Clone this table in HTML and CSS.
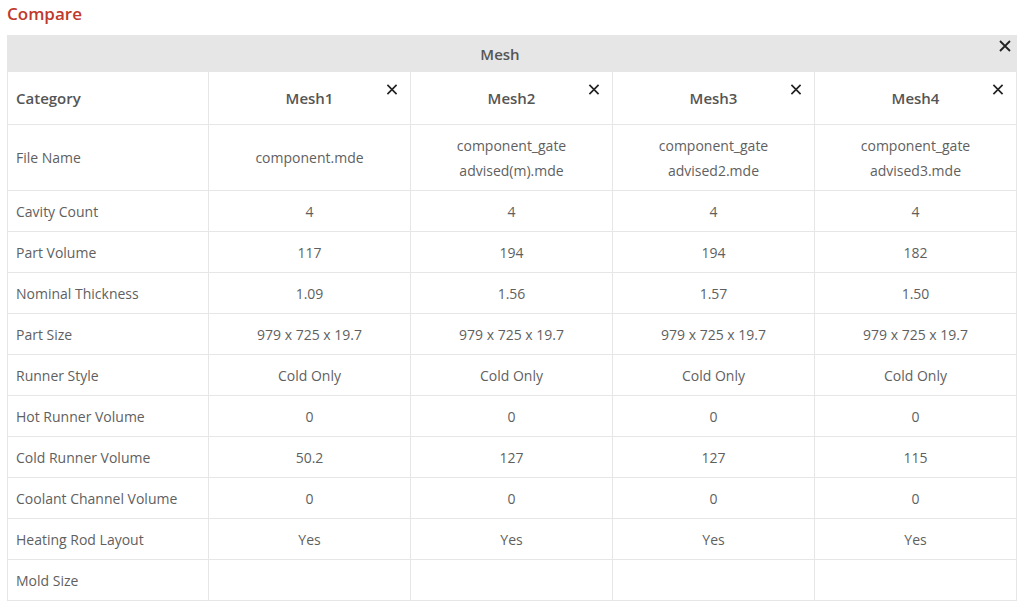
FILE: index.html
```html
<!DOCTYPE html>
<html>
<head>
<meta charset="utf-8">
<link rel="stylesheet" href="styles.css">
</head>
<body>
<h1 class="title">Compare</h1>
<table class="cmp">
  <colgroup>
    <col class="c-cat"><col><col><col><col>
  </colgroup>
  <thead>
    <tr class="group-row">
      <th colspan="5" class="group">Mesh<svg class="close close-group" viewBox="0 0 12 12"><path d="M1 1L11 11M11 1L1 11"/></svg></th>
    </tr>
    <tr class="head-row">
      <th class="cat">Category</th>
      <th>Mesh1<svg class="close" viewBox="0 0 12 12"><path d="M1 1L11 11M11 1L1 11"/></svg></th>
      <th>Mesh2<svg class="close" viewBox="0 0 12 12"><path d="M1 1L11 11M11 1L1 11"/></svg></th>
      <th>Mesh3<svg class="close" viewBox="0 0 12 12"><path d="M1 1L11 11M11 1L1 11"/></svg></th>
      <th>Mesh4<svg class="close" viewBox="0 0 12 12"><path d="M1 1L11 11M11 1L1 11"/></svg></th>
    </tr>
  </thead>
  <tbody>
    <tr class="tall">
      <td class="cat">File Name</td>
      <td>component.mde</td>
      <td>component_gate<br>advised(m).mde</td>
      <td>component_gate<br>advised2.mde</td>
      <td>component_gate<br>advised3.mde</td>
    </tr>
    <tr><td class="cat">Cavity Count</td><td>4</td><td>4</td><td>4</td><td>4</td></tr>
    <tr><td class="cat">Part Volume</td><td>117</td><td>194</td><td>194</td><td>182</td></tr>
    <tr><td class="cat">Nominal Thickness</td><td>1.09</td><td>1.56</td><td>1.57</td><td>1.50</td></tr>
    <tr><td class="cat">Part Size</td><td>979 x 725 x 19.7</td><td>979 x 725 x 19.7</td><td>979 x 725 x 19.7</td><td>979 x 725 x 19.7</td></tr>
    <tr><td class="cat">Runner Style</td><td>Cold Only</td><td>Cold Only</td><td>Cold Only</td><td>Cold Only</td></tr>
    <tr><td class="cat">Hot Runner Volume</td><td>0</td><td>0</td><td>0</td><td>0</td></tr>
    <tr><td class="cat">Cold Runner Volume</td><td>50.2</td><td>127</td><td>127</td><td>115</td></tr>
    <tr><td class="cat">Coolant Channel Volume</td><td>0</td><td>0</td><td>0</td><td>0</td></tr>
    <tr><td class="cat">Heating Rod Layout</td><td>Yes</td><td>Yes</td><td>Yes</td><td>Yes</td></tr>
    <tr><td class="cat">Mold Size</td><td></td><td></td><td></td><td></td></tr>
  </tbody>
</table>
</body>
</html>
```

FILE: styles.css
```css
html, body {
  margin: 0;
  padding: 0;
  background: #ffffff;
}
body {
  padding: 0 7px;
  font-family: "Open Sans", "Noto Sans", "Liberation Sans", sans-serif;
  color: #5a5a5a;
}
.title {
  margin: 0;
  height: 35px;
  font-size: 17px;
  font-weight: 600;
  line-height: 27px;
  color: #c0392b;
}
.cmp {
  width: 1010px;
  border-collapse: collapse;
  table-layout: fixed;
  font-size: 14px;
}
.c-cat { width: 201px; }
.cmp th, .cmp td {
  border: 1px solid #e6e6e6;
  padding: 0 8px;
  text-align: center;
  vertical-align: middle;
  color: #5f5f5f;
}
.cmp th {
  position: relative;
  font-size: 15px;
  font-weight: 600;
  color: #555555;
}
.group-row th {
  height: 35px;
  background: #e6e6e6;
  border-color: #e6e6e6;
  padding-right: 32px;
}
.head-row th {
  height: 52px;
}
.cmp .cat {
  text-align: left;
}
.cmp tbody td {
  height: 40px;
  font-weight: 400;
}
.cmp tbody tr.tall td {
  height: 65px;
  line-height: 25px;
}
.close {
  position: absolute;
  top: 12px;
  right: 12px;
  width: 12px;
  height: 11px;
  fill: none;
  stroke: #222222;
  stroke-width: 1.8;
}
.close-group {
  top: 4px;
  right: 5px;
  width: 12px;
  height: 12px;
}
```
